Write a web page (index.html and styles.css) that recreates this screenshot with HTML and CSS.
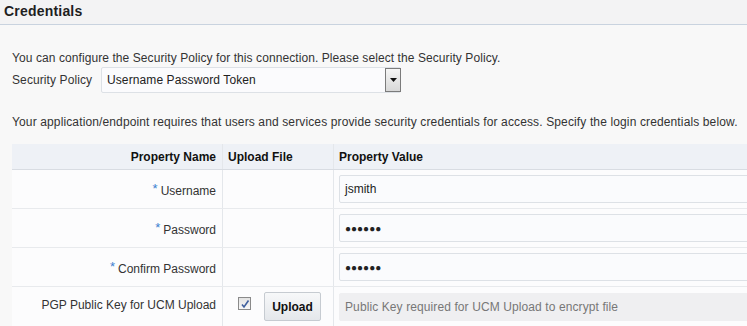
FILE: index.html
```html
<!DOCTYPE html>
<html>
<head>
<meta charset="utf-8">
<link rel="stylesheet" href="styles.css">
</head>
<body>
<div class="page">
  <div class="header"><h1>Credentials</h1></div>
  <div class="content">
    <p class="intro">You can configure the Security Policy for this connection. Please select the Security Policy.</p>
    <div class="policy-row">
      <span class="policy-label">Security Policy</span>
      <div class="select">
        <span class="select-value">Username Password Token</span>
        <span class="select-btn"><svg width="7" height="4" viewBox="0 0 7 4"><path d="M0 0H7L3.5 4Z" fill="#111"/></svg></span>
      </div>
    </div>
    <p class="intro2">Your application/endpoint requires that users and services provide security credentials for access. Specify the login credentials below.</p>
    <div class="table">
      <div class="row head">
        <div class="c1">Property Name</div>
        <div class="c2">Upload File</div>
        <div class="c3">Property Value</div>
      </div>
      <div class="row">
        <div class="c1"><span class="req">*</span> Username</div>
        <div class="c2"></div>
        <div class="c3"><div class="input">jsmith</div></div>
      </div>
      <div class="row">
        <div class="c1"><span class="req">*</span> Password</div>
        <div class="c2"></div>
        <div class="c3"><div class="input dots">●●●●●●</div></div>
      </div>
      <div class="row">
        <div class="c1"><span class="req">*</span> Confirm Password</div>
        <div class="c2"></div>
        <div class="c3"><div class="input dots">●●●●●●</div></div>
      </div>
      <div class="row last">
        <div class="c1 top">PGP Public Key for UCM Upload</div>
        <div class="c2 upload">
          <span class="check"><svg width="10" height="10" viewBox="0 0 10 10"><path d="M2 5.5L4 8L8.5 1.5" stroke="#3f5f9e" stroke-width="1.6" fill="none"/></svg></span>
          <span class="btn">Upload</span>
        </div>
        <div class="c3"><div class="input disabled">Public Key required for UCM Upload to encrypt file</div></div>
      </div>
    </div>
  </div>
</div>
</body>
</html>
```
FILE: styles.css
```css
* { box-sizing: border-box; }
html, body { margin: 0; padding: 0; }
body {
  width: 747px; height: 326px; overflow: hidden;
  background: #f8f8f8;
  font-family: Arial, "Liberation Sans", sans-serif;
  font-size: 12px; color: #333;
}
.header {
  height: 25px;
  border-bottom: 1px solid #c9d3df;
  background: #f3f3f4;
  padding: 3px 0 0 4px;
}
.header h1 { margin: 0; font-size: 14px; font-weight: bold; color: #1f1f1f; line-height: 16px; letter-spacing: 0.2px; }
.content { padding: 0 0 0 12px; }
.intro { margin: 26px 0 0 0; line-height: 14px; letter-spacing: 0.08px; }
.policy-row { display: flex; align-items: center; margin-top: 2px; }
.policy-label { width: 89px; color: #333; font-weight: 500; letter-spacing: 0.1px; }
.select {
  width: 300px; height: 26px; display: flex; align-items: center;
  background: #fbfbfd; border: 1px solid #dde1e6; border-radius: 2px;
  padding-left: 5px; justify-content: space-between;
}
.select-value { color: #222; letter-spacing: 0.1px; }
.select-btn {
  width: 16px; height: 24px; border: 1px solid #7b7b7b;
  background: linear-gradient(#f6f6f6, #d8d8d8);
  display: flex; align-items: center; justify-content: center;
  margin-right: -1px;
}
.intro2 { margin: 22px 0 0 0; line-height: 14px; letter-spacing: 0.13px; }
.table { margin-top: 15px; background: #fcfcfd; }
.row { display: flex; height: 39px; border-bottom: 1px solid #e8eaed; }
.row.head { height: 26px; background: #eef1f6; border-bottom: 1px solid #d8dce2; font-weight: bold; color: #111; }
.row.head > div { align-items: center; }
.row.last { border-bottom: none; }
.c1, .c2, .c3 { display: flex; align-items: center; }
.c1 { width: 211px; justify-content: flex-end; padding-right: 6px; border-right: 1px solid #e4e7eb; }
.c2 { width: 111px; padding-left: 5px; border-right: 1px solid #e4e7eb; }
.c3 { flex: 1; padding-left: 5px; overflow: hidden; }
.row:not(.head) .c1 { padding-top: 4px; }
.row .c1.top { align-items: flex-start; padding-top: 11px; }
.req { color: #3b7fd0; font-size: 13px; align-self: flex-start; margin-top: 10px; margin-right: 3px; line-height: 10px; }
.input {
  flex: 0 0 auto; width: calc(100% + 12px); height: 28px;
  background: #fafbfd; border: 1px solid #dde1e6; border-radius: 2px;
  display: flex; align-items: center; padding-left: 5px; color: #222;
}
.input.dots { font-size: 10px; letter-spacing: 0px; color: #222; }
.input.disabled { background: #efeff1; border-color: #efeff1; color: #777; letter-spacing: 0.1px; }
.upload { gap: 13px; padding-left: 15px; }
.check {
  width: 13px; height: 13px; border: 1px solid #8a8a8a;
  background: linear-gradient(#e3e3e3, #f7f7f7);
  display: flex; align-items: center; justify-content: center;
  margin-top: -6px;
}
.btn {
  width: 57px; height: 29px; display: flex; align-items: center; justify-content: center;
  background: linear-gradient(#f7f8f9, #e4e7eb); border: 1px solid #c6cbd1; border-radius: 2px;
  font-weight: bold; color: #111;
}
```
